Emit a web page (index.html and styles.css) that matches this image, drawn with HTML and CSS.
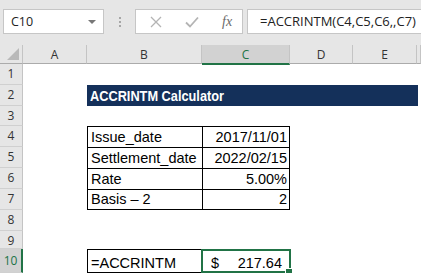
FILE: index.html
```html
<!DOCTYPE html>
<html>
<head>
  <link rel="stylesheet" href="styles.css">
</head>
<body>
  <div class="toolbar">
    <div class="name-box">
      <span>C10</span>
      <span class="caret"></span>
    </div>
    <div class="grip"><i></i><i></i><i></i></div>
    <div class="fx-buttons">
      <svg class="btn" width="12" height="12" viewBox="0 0 12 12">
        <path d="M1 1 L11 11 M11 1 L1 11" stroke="#b4b4b4" stroke-width="1.3" fill="none"/>
      </svg>
      <svg class="btn" width="14" height="12" viewBox="0 0 14 12">
        <path d="M1 6.5 L5 10.5 L13 1.5" stroke="#b4b4b4" stroke-width="1.8" fill="none"/>
      </svg>
      <span class="fx">fx</span>
    </div>
    <div class="formula">=ACCRINTM(C4,C5,C6,,C7)</div>
  </div>

  <div class="sheet">
    <div class="row head">
      <div class="rh corner">
        <svg width="12" height="12" viewBox="0 0 12 12"><path d="M12 0 L12 12 L0 12 Z" fill="#b9b9b9"/></svg>
      </div>
      <div class="ch col-a">A</div>
      <div class="ch col-b">B</div>
      <div class="ch col-c selected">C</div>
      <div class="ch col-d">D</div>
      <div class="ch col-e">E</div>
      <div class="ch col-f"></div>
    </div>

    <div class="row h21"><div class="rh">1</div></div>
    <div class="row h21">
      <div class="rh">2</div>
      <div class="cell col-a"></div>
      <div class="cell title"><span>ACCRINTM Calculator</span></div>
    </div>
    <div class="row h20"><div class="rh">3</div></div>

    <div class="row h21">
      <div class="rh">4</div>
      <div class="cell col-a"></div>
      <div class="cell col-b box">Issue_date</div>
      <div class="cell col-c box num">2017/11/01</div>
    </div>
    <div class="row h21">
      <div class="rh">5</div>
      <div class="cell col-a"></div>
      <div class="cell col-b box">Settlement_date</div>
      <div class="cell col-c box num">2022/02/15</div>
    </div>
    <div class="row h21">
      <div class="rh">6</div>
      <div class="cell col-a"></div>
      <div class="cell col-b box">Rate</div>
      <div class="cell col-c box num">5.00%</div>
    </div>
    <div class="row h21">
      <div class="rh">7</div>
      <div class="cell col-a"></div>
      <div class="cell col-b box last">Basis &ndash; 2</div>
      <div class="cell col-c box last num">2</div>
    </div>

    <div class="row h21"><div class="rh">8</div></div>
    <div class="row h18"><div class="rh">9</div></div>

    <div class="row h24">
      <div class="rh selected">10</div>
      <div class="cell col-a"></div>
      <div class="cell col-b boxed">=ACCRINTM</div>
      <div class="cell col-c active">
        <span>$</span>
        <span>217.64</span>
      </div>
    </div>
  </div>
</body>
</html>
```

FILE: styles.css
```css
body {
  margin: 0;
  background-color: #ffffff;
  font-family: "Liberation Sans", Arial, sans-serif;
  overflow: hidden;
}

/* formula bar */
.toolbar {
  display: flex;
  align-items: center;
  height: 45px;
  padding-left: 3px;
  padding-bottom: 2px;
  box-sizing: border-box;
  background-color: #e6e6e6;
  font-family: "Open Sans", sans-serif;
}

.name-box {
  display: flex;
  align-items: center;
  justify-content: space-between;
  width: 101px;
  height: 25px;
  padding: 0 7px 0 7px;
  box-sizing: border-box;
  background-color: #fff;
  border: 1px solid #c6c6c6;
  font-size: 12.5px;
  color: #222;
}

.caret {
  width: 0;
  height: 0;
  border-left: 4px solid transparent;
  border-right: 4px solid transparent;
  border-top: 4px solid #777;
}

.grip {
  display: flex;
  flex-direction: column;
  gap: 2px;
  margin: 0 14px 0 15px;
}

.grip i {
  width: 2px;
  height: 2px;
  background-color: #a6a6a6;
}

.fx-buttons {
  display: flex;
  align-items: center;
  width: 108px;
  height: 25px;
  box-sizing: border-box;
  padding-left: 14px;
  background-color: #fff;
  border: 1px solid #c6c6c6;
}

.btn {
  margin-right: 23px;
}

.fx {
  font-family: "Liberation Serif", serif;
  font-style: italic;
  font-size: 14px;
  color: #6a6a6a;
  margin-left: 0;
}

.formula {
  flex: 1;
  height: 25px;
  margin-left: 4px;
  padding-left: 12px;
  box-sizing: border-box;
  background-color: #fff;
  border: 1px solid #c6c6c6;
  border-right: none;
  font-size: 13px;
  line-height: 23px;
  color: #222;
  white-space: nowrap;
}

/* grid */
.row {
  display: flex;
}

.h18 { height: 18px; }
.h20 { height: 20px; }
.h21 { height: 21px; }
.h24 { height: 24px; }

.head {
  height: 19px;
  background-color: #e6e6e6;
  font-family: "Open Sans", sans-serif;
  font-size: 12px;
  color: #333;
}

.rh {
  width: 23px;
  flex: none;
  box-sizing: border-box;
  background-color: #e6e6e6;
  border-right: 1px solid #c4c4c4;
  border-bottom: 1px solid #d0d0d0;
  font-family: "Open Sans", sans-serif;
  font-size: 12px;
  color: #333;
  text-align: center;
  line-height: 20px;
}

.rh.corner {
  display: flex;
  align-items: flex-end;
  justify-content: flex-end;
  padding: 0 3px 3px 0;
  border-bottom: 1px solid #ababab;
}

.rh.selected {
  background-color: #d2d2d2;
  color: #217346;
  border-right: 2px solid #217346;
  line-height: 23px;
}

.ch {
  flex: none;
  box-sizing: border-box;
  border-right: 1px solid #c4c4c4;
  border-bottom: 1px solid #ababab;
  text-align: center;
  line-height: 19px;
}

.ch.selected {
  background-color: #d2d2d2;
  color: #217346;
  border-bottom: 2px solid #217346;
  position: relative;
  z-index: 1;
  height: 20px;
}

.col-a { width: 64px; flex: none; }
.col-b { width: 115px; flex: none; }
.col-c { width: 88px; flex: none; }
.col-d { width: 63px; flex: none; }
.col-e { width: 64px; flex: none; }
.col-f { flex: 1; }

.cell {
  box-sizing: border-box;
  font-size: 14.5px;
  color: #000;
  padding: 0 3px;
  display: flex;
  align-items: flex-end;
  padding-bottom: 2px;
  white-space: nowrap;
}

.title {
  width: 331px;
  flex: none;
  background-color: #14305a;
  color: #fff;
  font-weight: bold;
  font-size: 14.5px;
  align-items: center;
  padding-bottom: 0;
}

/* narrow bold heading */
.title span {
  display: inline-block;
  transform: scaleX(0.88);
  transform-origin: left center;
}

.box {
  border-top: 1px solid #000;
}

.col-b.box {
  border-left: 1px solid #000;
}

.col-c.box {
  border-left: 1px solid #000;
  border-right: 1px solid #000;
}

.box.last {
  border-bottom: 1px solid #000;
}

.num {
  justify-content: flex-end;
  padding-right: 2px;
}

.boxed {
  border: 1px solid #000;
  padding-bottom: 1px;
}

.active {
  position: relative;
  justify-content: space-between;
  padding: 0 8px 2px 9px;
}

.active::before {
  content: "";
  position: absolute;
  left: -1px;
  top: 0;
  right: -1px;
  bottom: 0;
  border: 2px solid #217346;
}

.active::after {
  content: "";
  position: absolute;
  right: -3px;
  bottom: -3px;
  width: 6px;
  height: 6px;
  background-color: #217346;
  border: 1px solid #fff;
}
```
